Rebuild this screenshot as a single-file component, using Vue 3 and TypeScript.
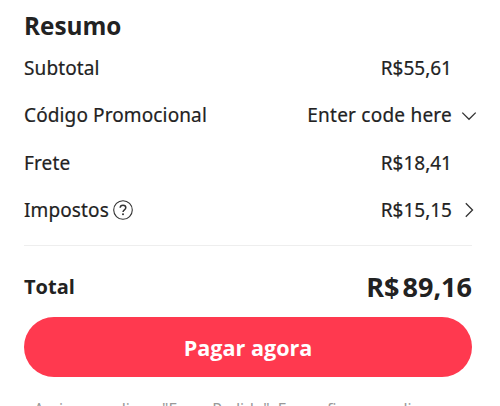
<script setup lang="ts">
interface SummaryRow {
  label: string
  value: string
  help?: boolean
  arrow?: 'down' | 'right'
}

const rows: SummaryRow[] = [
  { label: 'Subtotal', value: 'R$55,61' },
  { label: 'Código Promocional', value: 'Enter code here', arrow: 'down' },
  { label: 'Frete', value: 'R$18,41' },
  { label: 'Impostos', value: 'R$15,15', help: true, arrow: 'right' },
]
</script>

<template>
  <section class="summary">
    <h2 class="title">Resumo</h2>

    <div v-for="row in rows" :key="row.label" class="row">
      <span class="label">{{ row.label }}</span>
      <svg v-if="row.help" class="help" viewBox="0 0 20 20">
        <circle cx="10" cy="10" r="9.3" />
        <path class="mark" d="M7.2 7.8C7.2 6.1 8.4 5.2 10 5.2s2.8 1 2.8 2.5c0 2-2.8 2.2-2.8 4.3" />
        <circle class="dot" cx="10" cy="14.3" r="1" />
      </svg>
      <span class="value" :class="{ prompt: row.arrow === 'down' }">{{ row.value }}</span>
      <span class="arrow">
        <svg v-if="row.arrow === 'down'" viewBox="0 0 16 16">
          <path d="M1.3 5.6 8 12.3l6.7-6.7" />
        </svg>
        <svg v-else-if="row.arrow === 'right'" viewBox="0 0 16 16">
          <path d="M4.8 1.3 11.5 8l-6.7 6.7" />
        </svg>
      </span>
    </div>

    <div class="total">
      <span class="total-label">Total</span>
      <span class="total-value"><span class="currency">R$</span>89,16</span>
    </div>

    <button class="pay" type="button">Pagar agora</button>

    <p class="terms">Assim que clique "Fazer Pedido". Eu confirmo que li</p>
  </section>
</template>

<style>
body {
  background: #fff;
  overflow: hidden;
}
</style>

<style scoped>
.summary {
  box-sizing: border-box;
  height: 406px;
  padding: 8px 28px 0 24px;
  overflow: hidden;
  font-family: 'Noto Sans', 'Open Sans', sans-serif;
  color: #222;
}

.title {
  margin: 0;
  font-family: 'Open Sans', sans-serif;
  font-size: 24.3px;
  font-weight: 700;
  line-height: 36px;
}

.row {
  display: flex;
  align-items: center;
  height: 47.5px;
  margin-right: -5px;
  font-size: 19px;
  -webkit-text-stroke: 0.2px #222;
}

.label {
  letter-spacing: 0.12px;
}

.help {
  width: 20px;
  height: 20px;
  margin-left: 4px;
  fill: none;
  stroke: #333;
  stroke-width: 1.1;
}

.help .mark {
  stroke-width: 1.5;
}

.help .dot {
  fill: #333;
  stroke: none;
}

.value {
  margin-left: auto;
}

.prompt {
  letter-spacing: 0.23px;
}

.arrow {
  width: 16px;
  height: 16px;
  margin-left: 9px;
}

.arrow svg {
  display: block;
  fill: none;
  stroke: #333;
  stroke-width: 1.3;
}

.total {
  display: flex;
  align-items: center;
  justify-content: space-between;
  box-sizing: border-box;
  height: 72.4px;
  margin-top: 11px;
  padding-top: 10px;
  border-top: 1px solid #eee;
  font-family: 'Open Sans', sans-serif;
}

.total-label {
  font-size: 20px;
  font-weight: 700;
}

.total-value {
  font-size: 27px;
  font-weight: 700;
}

.currency {
  margin-right: 3px;
}

.pay {
  display: block;
  width: 100%;
  height: 60px;
  padding: 0;
  border: 0;
  border-radius: 30px;
  background: #ff394f;
  color: #fff;
  font-family: 'Open Sans', sans-serif;
  font-size: 21.6px;
  font-weight: 700;
}

.terms {
  margin: 21px 0 0 10px;
  color: #999;
  font-size: 15.7px;
  line-height: 22px;
  white-space: nowrap;
}
</style>
